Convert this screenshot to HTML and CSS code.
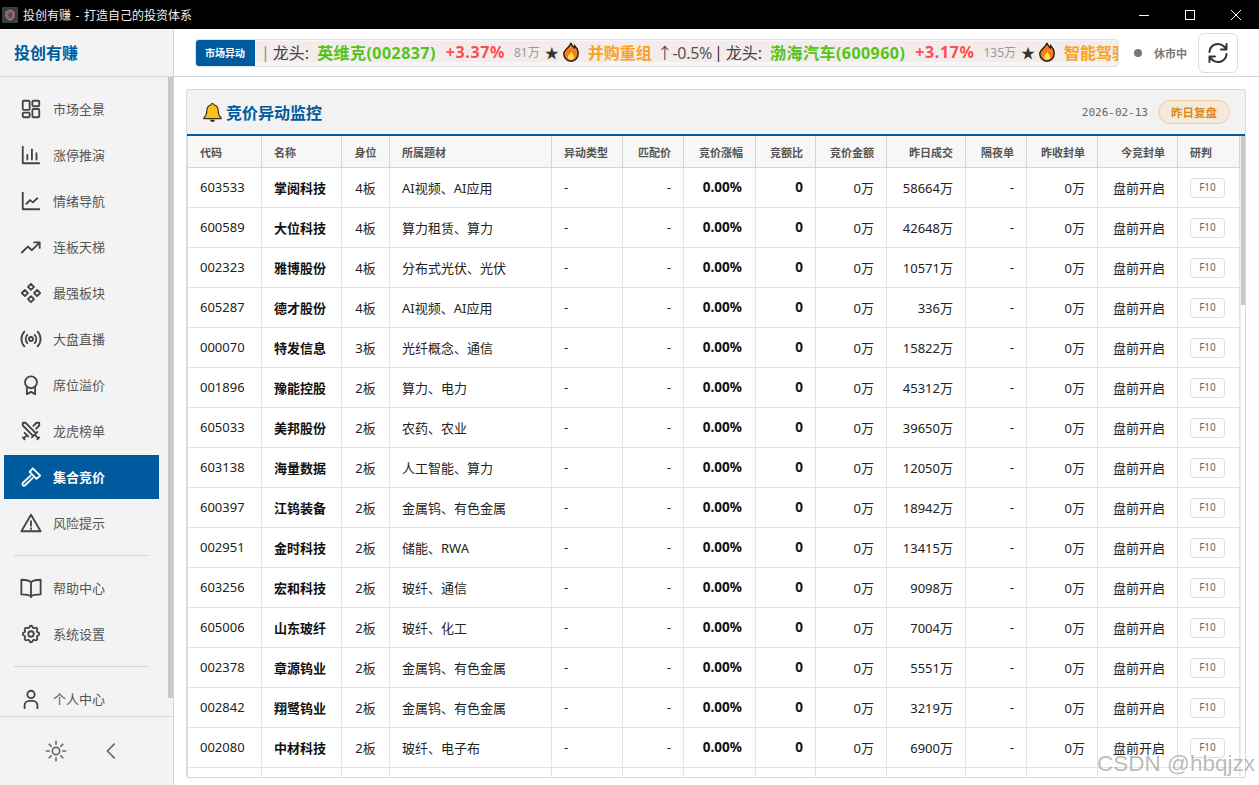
FILE: index.html
```html
<!DOCTYPE html>
<html lang="zh-CN">
<head>
<meta charset="utf-8">
<title>投创有赚 - 打造自己的投资体系</title>
<link rel="stylesheet" href="styles.css">
</head>
<body>
<svg class="defs" width="0" height="0" aria-hidden="true">
  <symbol id="fire" viewBox="0 0 16 20"><path d="M8 .8c.6 2.6 2.2 3.6 3.2 5 .4-.7.5-1.300.5-2 2 2 3.500 4.500 3.500 7.500 0 4.500-3.200 7.900-7.200 7.900S.8 15.800.8 11.800C.8 7.500 6.800 5.500 8 .8z" fill="#f57c1f" stroke="#2a1a10" stroke-width="1.400"/><path d="M8.200 9.500c.4 1.800 2.800 2.800 2.800 5.300 0 1.700-1.300 3-3 3s-3-1.300-3-3c0-2.300 2.700-3 3.200-5.300z" fill="#ffe14d"/></symbol>
  <symbol id="i-dash" viewBox="0 0 24 24"><rect x="3" y="3" width="7.500" height="10" rx="1"/><rect x="13.500" y="3" width="7.500" height="6" rx="1"/><rect x="3" y="16" width="7.500" height="5" rx="1"/><rect x="13.500" y="12" width="7.500" height="9" rx="1"/></symbol>
</svg>

<header class="titlebar">
  <div class="title-left">
    <svg class="app-icon" viewBox="0 0 16 16"><rect width="16" height="16" rx="1" fill="#3a3d4a"/><path d="M8 3l4 2v4c0 2-2 3.500-4 4-2-.5-4-2-4-4V5z" fill="#8a5a50" stroke="#b9a7a0" stroke-width=".8"/><path d="M6 8l4-2-1 5z" fill="#50404a"/></svg>
    <span>投创有赚 - 打造自己的投资体系</span>
  </div>
  <div class="win-controls">
    <span class="win-btn"><svg viewBox="0 0 12 12" width="12" height="12"><path d="M1 6.500h10" stroke="#fff" fill="none"/></svg></span>
    <span class="win-btn"><svg viewBox="0 0 12 12" width="12" height="12"><rect x="1.500" y="1.500" width="9" height="9" stroke="#fff" fill="none"/></svg></span>
    <span class="win-btn"><svg viewBox="0 0 12 12" width="12" height="12"><path d="M1 1l10 10M11 1L1 11" stroke="#fff" fill="none"/></svg></span>
  </div>
</header>

<div class="app">
  <aside class="sidebar">
    <div class="brand">投创有赚</div>
    <div class="nav-area">
      <nav class="nav">
        <a class="nav-item"><svg class="ico" viewBox="0 0 24 24"><use href="#i-dash"/></svg><span>市场全景</span></a>
        <a class="nav-item"><svg class="ico" viewBox="0 0 24 24"><path d="M3 3v18h18M8 17v-5M13 17V6M18 17v-7"/></svg><span>涨停推演</span></a>
        <a class="nav-item"><svg class="ico" viewBox="0 0 24 24"><path d="M3 3v18h18M7 15l4-4 3 2.500 5-4.500"/></svg><span>情绪导航</span></a>
        <a class="nav-item"><svg class="ico" viewBox="0 0 24 24"><path d="M2 18l6.500-6.500 4.500 4 8.500-8.500M15.500 7h6v6"/></svg><span>连板天梯</span></a>
        <a class="nav-item"><svg class="ico" viewBox="0 0 24 24"><path d="M12 2l3.300 3.300L12 8.600 8.700 5.300zM5.300 8.700L8.600 12l-3.300 3.300L2 12zM18.700 8.700L22 12l-3.300 3.300L15.400 12zM12 15.400l3.300 3.300L12 22l-3.300-3.300z"/></svg><span>最强板块</span></a>
        <a class="nav-item"><svg class="ico" viewBox="0 0 24 24"><circle cx="12" cy="12" r="2.200"/><path d="M8 16.500a6.500 6.500 0 0 1 0-9M16 7.500a6.500 6.500 0 0 1 0 9M4.800 20a11.500 11.500 0 0 1 0-16M19.200 4a11.500 11.500 0 0 1 0 16"/></svg><span>大盘直播</span></a>
        <a class="nav-item"><svg class="ico" viewBox="0 0 24 24"><circle cx="12" cy="9" r="6.500"/><path d="M7.500 14v8l4.500-2.500 4.500 2.500v-8"/></svg><span>席位溢价</span></a>
        <a class="nav-item"><svg class="ico" viewBox="0 0 24 24"><path d="M14.500 17.500L3 6V3h3l11.500 11.500M13 19l6-6M16 16l4 4M19 21l2-2M14.500 6.500L18 3h3v3l-3.500 3.500M5 14l4 4M7 17l-3 3M3 19l2 2"/></svg><span>龙虎榜单</span></a>
        <a class="nav-item active"><svg class="ico" viewBox="0 0 24 24"><path d="M14 2.500l8 8-4 3.500-7.500-7.500zM11.500 10.500L3 18.500a2 2 0 0 0 0 2.500 2 2 0 0 0 2.500 0l8.500-8"/></svg><span>集合竞价</span></a>
        <a class="nav-item"><svg class="ico" viewBox="0 0 24 24"><path d="M12 3L1.500 21h21zM12 10v5M12 17.500v1"/></svg><span>风险提示</span></a>
        <div class="nav-divider"></div>
        <a class="nav-item"><svg class="ico" viewBox="0 0 24 24"><path d="M12 5.500C10 4 7 3 1.500 3v16c5.500 0 8.500 .5 10.500 2 2-1.500 5-2 10.500-2V3C17 3 14 4 12 5.500zM12 5.500V22"/></svg><span>帮助中心</span></a>
        <a class="nav-item"><svg class="ico" viewBox="0 0 24 24"><path d="M10.325 4.317c.426-1.756 2.924-1.756 3.350 0a1.724 1.724 0 0 0 2.573 1.066c1.543-.94 3.310 .826 2.370 2.370a1.724 1.724 0 0 0 1.065 2.572c1.756 .426 1.756 2.924 0 3.350a1.724 1.724 0 0 0-1.066 2.573c.94 1.543-.826 3.310-2.370 2.370a1.724 1.724 0 0 0-2.572 1.065c-.426 1.756-2.924 1.756-3.350 0a1.724 1.724 0 0 0-2.573-1.066c-1.543 .94-3.310-.826-2.370-2.370a1.724 1.724 0 0 0-1.065-2.572c-1.756-.426-1.756-2.924 0-3.350a1.724 1.724 0 0 0 1.066-2.573c-.94-1.543 .826-3.310 2.370-2.370 1 .608 2.296 .07 2.572-1.065z"/><circle cx="12" cy="12" r="3"/></svg><span>系统设置</span></a>
        <div class="nav-divider"></div>
        <a class="nav-item"><svg class="ico" viewBox="0 0 24 24"><circle cx="12" cy="7" r="4"/><path d="M5 22v-3a5 5 0 0 1 5-5h4a5 5 0 0 1 5 5v3"/></svg><span>个人中心</span></a>
      </nav>
      <div class="side-bar-track"><div class="side-bar-thumb"></div></div>
    </div>
    <div class="side-foot">
      <svg class="foot-ico" viewBox="0 0 24 24"><circle cx="12" cy="12" r="4"/><path d="M12 1.500v3M12 19.500v3M1.500 12h3M19.500 12h3M4.600 4.600l2.100 2.100M17.300 17.300l2.100 2.100M4.600 19.400l2.100-2.100M17.300 6.700l2.100-2.100"/></svg>
      <svg class="foot-ico" viewBox="0 0 24 24"><path d="M15.500 4.500L8 12l7.500 7.500"/></svg>
    </div>
  </aside>

  <main class="main">
    <div class="topbar">
      <div class="ticker">
        <div class="ticker-label">市场异动</div>
        <div class="ticker-track">
          <div class="ticker-band">
            <span class="t-sep">|</span> <span class="t-lead">龙头:</span>
            <b class="t-name">英维克(002837)</b>
            <b class="t-up">+3.37%</b>
            <span class="t-vol">81万</span>
            <span class="t-star">★</span>
            <svg class="t-fire"><use href="#fire"/></svg>
            <b class="t-tag">并购重组</b>
            <span class="t-pct">↑-0.5%</span>
            <span class="t-sep2">|</span> <span class="t-lead">龙头:</span>
            <b class="t-name">渤海汽车(600960)</b>
            <b class="t-up">+3.17%</b>
            <span class="t-vol">135万</span>
            <span class="t-star">★</span>
            <svg class="t-fire"><use href="#fire"/></svg>
            <b class="t-tag">智能驾驶</b>
          </div>
        </div>
      </div>
      <div class="status"><i class="status-dot"></i><span>休市中</span></div>
      <button class="refresh" type="button" aria-label="刷新"><svg viewBox="0 0 24 24" width="24" height="24"><path d="M3.500 11a8.500 8.500 0 0 1 14.500-5.500l2.500 2.500M20.500 3v5.500H15M20.500 13a8.500 8.500 0 0 1-14.500 5.500L3.500 16M3.500 21v-5.500H9"/></svg></button>
    </div>

    <div class="content">
      <section class="panel">
        <div class="panel-head">
          <div class="panel-title">
            <svg class="bell" viewBox="0 0 20 22"><path d="M10 1.500c.9 0 1.500.6 1.500 1.400 3 .8 4.500 3.300 4.500 6.600 0 3.600 1 5.300 3 7v1H1v-1c2-1.700 3-3.400 3-7 0-3.300 1.500-5.800 4.500-6.600 0-.8.6-1.400 1.500-1.400z" fill="#fcc21b" stroke="#3a2c12" stroke-width="1.200"/><path d="M7.500 18.500a2.500 2.500 0 0 0 5 0z" fill="#3a2c12"/></svg>
            <h2>竞价异动监控</h2>
          </div>
          <div class="panel-tools">
            <span class="date">2026-02-13</span>
            <span class="review">昨日复盘</span>
          </div>
        </div>
        <div class="table-wrap">
          <div class="table-clip">
            <table class="grid">
              <colgroup>
                <col class="c1"><col class="c2"><col class="c3"><col class="c4"><col class="c5"><col class="c6"><col class="c7"><col class="c8"><col class="c9"><col class="c10"><col class="c11"><col class="c12"><col class="c13"><col class="c14">
              </colgroup>
              <thead>
                <tr><th>代码</th><th>名称</th><th class="ctr">身位</th><th>所属题材</th><th>异动类型</th><th class="r">匹配价</th><th class="r">竞价涨幅</th><th class="r">竞额比</th><th class="r">竞价金额</th><th class="r">昨日成交</th><th class="r">隔夜单</th><th class="r">昨收封单</th><th class="r">今竞封单</th><th>研判</th></tr>
              </thead>
              <tbody>
                <tr><td>603533</td><td class="b">掌阅科技</td><td class="ctr">4板</td><td>AI视频、AI应用</td><td>-</td><td class="r">-</td><td class="r b pct">0.00%</td><td class="r b">0</td><td class="r">0万</td><td class="r">58664万</td><td class="r">-</td><td class="r">0万</td><td class="r">盘前开启</td><td><span class="f10">F10</span></td></tr>
                <tr><td>600589</td><td class="b">大位科技</td><td class="ctr">4板</td><td>算力租赁、算力</td><td>-</td><td class="r">-</td><td class="r b pct">0.00%</td><td class="r b">0</td><td class="r">0万</td><td class="r">42648万</td><td class="r">-</td><td class="r">0万</td><td class="r">盘前开启</td><td><span class="f10">F10</span></td></tr>
                <tr><td>002323</td><td class="b">雅博股份</td><td class="ctr">4板</td><td>分布式光伏、光伏</td><td>-</td><td class="r">-</td><td class="r b pct">0.00%</td><td class="r b">0</td><td class="r">0万</td><td class="r">10571万</td><td class="r">-</td><td class="r">0万</td><td class="r">盘前开启</td><td><span class="f10">F10</span></td></tr>
                <tr><td>605287</td><td class="b">德才股份</td><td class="ctr">4板</td><td>AI视频、AI应用</td><td>-</td><td class="r">-</td><td class="r b pct">0.00%</td><td class="r b">0</td><td class="r">0万</td><td class="r">336万</td><td class="r">-</td><td class="r">0万</td><td class="r">盘前开启</td><td><span class="f10">F10</span></td></tr>
                <tr><td>000070</td><td class="b">特发信息</td><td class="ctr">3板</td><td>光纤概念、通信</td><td>-</td><td class="r">-</td><td class="r b pct">0.00%</td><td class="r b">0</td><td class="r">0万</td><td class="r">15822万</td><td class="r">-</td><td class="r">0万</td><td class="r">盘前开启</td><td><span class="f10">F10</span></td></tr>
                <tr><td>001896</td><td class="b">豫能控股</td><td class="ctr">2板</td><td>算力、电力</td><td>-</td><td class="r">-</td><td class="r b pct">0.00%</td><td class="r b">0</td><td class="r">0万</td><td class="r">45312万</td><td class="r">-</td><td class="r">0万</td><td class="r">盘前开启</td><td><span class="f10">F10</span></td></tr>
                <tr><td>605033</td><td class="b">美邦股份</td><td class="ctr">2板</td><td>农药、农业</td><td>-</td><td class="r">-</td><td class="r b pct">0.00%</td><td class="r b">0</td><td class="r">0万</td><td class="r">39650万</td><td class="r">-</td><td class="r">0万</td><td class="r">盘前开启</td><td><span class="f10">F10</span></td></tr>
                <tr><td>603138</td><td class="b">海量数据</td><td class="ctr">2板</td><td>人工智能、算力</td><td>-</td><td class="r">-</td><td class="r b pct">0.00%</td><td class="r b">0</td><td class="r">0万</td><td class="r">12050万</td><td class="r">-</td><td class="r">0万</td><td class="r">盘前开启</td><td><span class="f10">F10</span></td></tr>
                <tr><td>600397</td><td class="b">江钨装备</td><td class="ctr">2板</td><td>金属钨、有色金属</td><td>-</td><td class="r">-</td><td class="r b pct">0.00%</td><td class="r b">0</td><td class="r">0万</td><td class="r">18942万</td><td class="r">-</td><td class="r">0万</td><td class="r">盘前开启</td><td><span class="f10">F10</span></td></tr>
                <tr><td>002951</td><td class="b">金时科技</td><td class="ctr">2板</td><td>储能、RWA</td><td>-</td><td class="r">-</td><td class="r b pct">0.00%</td><td class="r b">0</td><td class="r">0万</td><td class="r">13415万</td><td class="r">-</td><td class="r">0万</td><td class="r">盘前开启</td><td><span class="f10">F10</span></td></tr>
                <tr><td>603256</td><td class="b">宏和科技</td><td class="ctr">2板</td><td>玻纤、通信</td><td>-</td><td class="r">-</td><td class="r b pct">0.00%</td><td class="r b">0</td><td class="r">0万</td><td class="r">9098万</td><td class="r">-</td><td class="r">0万</td><td class="r">盘前开启</td><td><span class="f10">F10</span></td></tr>
                <tr><td>605006</td><td class="b">山东玻纤</td><td class="ctr">2板</td><td>玻纤、化工</td><td>-</td><td class="r">-</td><td class="r b pct">0.00%</td><td class="r b">0</td><td class="r">0万</td><td class="r">7004万</td><td class="r">-</td><td class="r">0万</td><td class="r">盘前开启</td><td><span class="f10">F10</span></td></tr>
                <tr><td>002378</td><td class="b">章源钨业</td><td class="ctr">2板</td><td>金属钨、有色金属</td><td>-</td><td class="r">-</td><td class="r b pct">0.00%</td><td class="r b">0</td><td class="r">0万</td><td class="r">5551万</td><td class="r">-</td><td class="r">0万</td><td class="r">盘前开启</td><td><span class="f10">F10</span></td></tr>
                <tr><td>002842</td><td class="b">翔鹭钨业</td><td class="ctr">2板</td><td>金属钨、有色金属</td><td>-</td><td class="r">-</td><td class="r b pct">0.00%</td><td class="r b">0</td><td class="r">0万</td><td class="r">3219万</td><td class="r">-</td><td class="r">0万</td><td class="r">盘前开启</td><td><span class="f10">F10</span></td></tr>
                <tr><td>002080</td><td class="b">中材科技</td><td class="ctr">2板</td><td>玻纤、电子布</td><td>-</td><td class="r">-</td><td class="r b pct">0.00%</td><td class="r b">0</td><td class="r">0万</td><td class="r">6900万</td><td class="r">-</td><td class="r">0万</td><td class="r">盘前开启</td><td><span class="f10">F10</span></td></tr>
                <tr><td></td><td></td><td></td><td></td><td></td><td></td><td></td><td></td><td></td><td></td><td></td><td></td><td></td><td></td></tr>
              </tbody>
            </table>
          </div>
          <div class="vbar"><div class="vbar-thumb"></div></div>
        </div>
      </section>
    </div>
  </main>
</div>
<div class="watermark">CSDN @hbqjzx</div>
</body>
</html>
```
FILE: styles.css
```css
* { box-sizing: border-box; }
html, body { margin: 0; height: 100%; overflow: hidden; }
body {
  display: flex;
  flex-direction: column;
  height: 785px;
  font-family: "Noto Sans", "Noto Sans CJK SC", sans-serif;
  font-size: 13px;
  color: #333;
  background: #fff;
}
.defs { position: absolute; }

/* title bar */
.titlebar {
  flex: 0 0 29px;
  display: flex;
  align-items: center;
  justify-content: space-between;
  background: #000;
  color: #eee;
  font-size: 12px;
  word-spacing: 1.500px;
}
.title-left { display: flex; align-items: center; gap: 5px; padding-left: 2px; }
.app-icon { width: 16px; height: 16px; }
.win-controls { display: flex; }
.win-btn { width: 46px; height: 29px; display: flex; align-items: center; justify-content: center; }

.app { flex: 1; min-height: 0; display: flex; }

/* sidebar */
.sidebar {
  flex: 0 0 174px;
  display: flex;
  flex-direction: column;
  background: #f3f3f3;
  border-right: 1px solid #d4d4d4;
}
.brand {
  flex: 0 0 48px;
  display: flex;
  align-items: center;
  padding: 0 0 2px 14px;
  border-bottom: 1px solid #d4d4d4;
  color: #005a9e;
  font-size: 16px;
  font-weight: 700;
}
.nav-area { flex: 1; min-height: 0; display: flex; overflow: hidden; }
.nav {
  flex: 1;
  min-width: 0;
  padding: 10px 9px 0 4px;
  display: flex;
  flex-direction: column;
  gap: 2px;
}
.nav-item {
  flex: 0 0 44px;
  display: flex;
  align-items: center;
  gap: 11px;
  padding-left: 16px;
  color: #555;
  font-size: 13px;
}
.nav-item span { padding-bottom: 2px; }
.ico {
  flex: 0 0 22px;
  width: 22px;
  height: 22px;
  fill: none;
  stroke: #444;
  stroke-width: 2;
  stroke-linejoin: round;
  stroke-linecap: round;
}
.nav-item.active { background: #005a9e; color: #fff; font-weight: 700; }
.nav-item.active .ico { stroke: #fff; }
.nav-divider { flex: 0 0 1px; margin: 8px 10px; background: #d4d4d4; }
.side-bar-track { flex: 0 0 5px; width: 5px; }
.side-bar-thumb { height: 621px; background: #c9c9c9; }
.side-foot {
  flex: 0 0 69px;
  display: flex;
  align-items: center;
  justify-content: center;
  gap: 33px;
  padding-right: 6px;
  border-top: 1px solid #d4d4d4;
}
.foot-ico { width: 22px; height: 22px; fill: none; stroke: #666; stroke-width: 1.800; stroke-linecap: round; stroke-linejoin: round; }

/* top bar */
.main { flex: 1; min-width: 0; display: flex; flex-direction: column; }
.topbar {
  flex: 0 0 48px;
  display: flex;
  align-items: center;
  padding: 0 21px;
  border-bottom: 1px solid #d4d4d4;
  background: #fff;
}
.ticker {
  flex: 0 0 924px;
  height: 28px;
  display: flex;
  border: 1px solid #dde0ea;
  border-radius: 4px;
  overflow: hidden;
  background: #f6f6fa;
}
.ticker-label {
  flex: 0 0 60px;
  margin: -1px 0 -1px -1px;
  display: flex;
  align-items: center;
  justify-content: center;
  background: #005a9e;
  color: #fff;
  font-size: 10px;
  font-weight: 700;
}
.ticker-track { flex: 1; min-width: 0; overflow: hidden; padding-top: 1px; }
.ticker-band {
  display: flex;
  align-items: center;
  width: 1000px;
  height: 21px;
  padding: 2px 0 0 6px;
  white-space: nowrap;
  font-size: 16px;
  color: #444;
  background: #f4ecea;
}
.t-sep { color: #888; margin-right: 3px; }
.t-sep2 { color: #333; margin: 0 3px 0 2px; }
.t-lead { margin-right: 8px; }
.t-name { color: #52c41a; margin-right: 10px; letter-spacing: .45px; }
.t-up { color: #ff4d4f; margin-right: 9px; letter-spacing: .6px; }
.t-vol { color: #999; font-size: 12px; margin-right: 5px; }
.t-star { color: #333; font-size: 14px; margin-right: 4px; }
.t-fire { width: 16px; height: 20px; margin-right: 9px; }
.t-tag { color: #faa21b; margin-right: 5px; }
.t-pct { color: #555; letter-spacing: -.3px; }
.status {
  flex: 1;
  display: flex;
  align-items: center;
  gap: 12px;
  padding-left: 15px;
  color: #777;
  font-size: 11px;
  font-weight: 700;
}
.status-dot { width: 8px; height: 8px; border-radius: 50%; background: #777; }
.refresh {
  flex: 0 0 40px;
  height: 40px;
  padding: 0;
  display: flex;
  align-items: center;
  justify-content: center;
  background: #fff;
  border: 1px solid #ddd;
  border-radius: 6px;
}
.refresh svg { fill: none; stroke: #333; stroke-width: 2; stroke-linecap: round; stroke-linejoin: round; }

/* panel */
.content { flex: 1; min-height: 0; padding: 12px 13px 7px 12px; }
.panel {
  height: 100%;
  display: flex;
  flex-direction: column;
  border: 1px solid #d9d9d9;
  border-radius: 2px;
  background: #fff;
  overflow: hidden;
}
.panel-head {
  flex: 0 0 46px;
  display: flex;
  align-items: center;
  justify-content: space-between;
  padding: 0 15px 0 16px;
  background: #f2f2f2;
  border-bottom: 2px solid #005a9e;
}
.panel-title { display: flex; align-items: center; gap: 4px; }
.bell { width: 19px; height: 21px; }
.panel-title h2 { margin: 0; color: #005a9e; font-size: 16px; font-weight: 700; }
.panel-tools { display: flex; align-items: center; gap: 10px; }
.date { font-family: "DejaVu Sans Mono", monospace; font-size: 11px; color: #666; }
.review {
  width: 72px;
  height: 24px;
  display: flex;
  align-items: center;
  justify-content: center;
  border: 1px solid #eacfa6;
  border-radius: 12px;
  background: #f5e9d9;
  color: #d9891f;
  font-size: 11.500px;
  font-weight: 700;
}

/* table */
.table-wrap { flex: 1; min-height: 0; display: flex; border-left: 1px solid #ddd; }
.table-clip { flex: 0 0 1052px; overflow: hidden; }
.vbar { flex: 0 0 5px; border-left: 1px solid #eee; }
.vbar-thumb { height: 169px; background: #c9c9c9; }
.grid { width: 1052px; table-layout: fixed; border-collapse: separate; border-spacing: 0; }
.c1 { width: 74px; } .c2 { width: 80px; } .c3 { width: 48px; } .c4 { width: 162px; }
.c5 { width: 71px; } .c6 { width: 61px; } .c7 { width: 72px; } .c8 { width: 60px; }
.c9 { width: 71px; } .c10 { width: 79px; } .c11 { width: 61px; } .c12 { width: 71px; }
.c13 { width: 80px; } .c14 { width: 62px; }
.grid th {
  height: 32px;
  padding: 0 12px;
  background: #f7f7f7;
  border-right: 1px solid #d4d4d4;
  border-bottom: 1px solid #d4d4d4;
  color: #555;
  font-size: 11px;
  font-weight: 700;
  text-align: left;
  white-space: nowrap;
}
.grid td {
  height: 40px;
  padding: 0 12px 1px;
  border-right: 1px solid #e4e4e4;
  border-bottom: 1px solid #e4e4e4;
  color: #222;
  font-size: 13px;
  white-space: nowrap;
}
.grid .r { text-align: right; }
.grid .ctr { text-align: center; padding: 0 0 1px; }
.grid th.ctr { padding: 0; }
.grid .b { font-weight: 700; color: #111; }
.grid td.r.b { font-size: 13.500px; }
.grid td.pct { padding-right: 13px; }
.f10 {
  display: block;
  width: 35px;
  height: 20px;
  margin-top: 2px;
  border: 1px solid #ddd;
  border-radius: 4px;
  background: #fff;
  color: #666;
  font-size: 10px;
  line-height: 17px;
  text-align: center;
}

.watermark {
  position: absolute;
  right: 4px;
  bottom: 8px;
  font-family: "Liberation Sans", sans-serif;
  font-size: 22.500px;
  color: rgba(130, 130, 130, .55);
  text-shadow: 1px 1px 1px rgba(255, 255, 255, .7);
}
```
